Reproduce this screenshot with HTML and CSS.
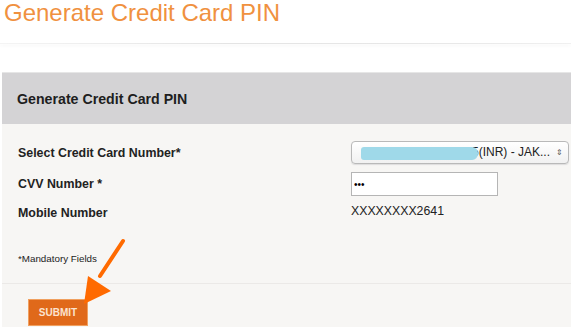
FILE: index.html
```html
<!DOCTYPE html>
<html>
  <head>
    <title>Generate Credit Card PIN</title>
    <link rel="stylesheet" href="styles.css">
  </head>
  <body>
    <h1 class="paginatitel">Generate Credit Card PIN</h1>
    <div class="titellijn"></div>

    <div class="paneel">
      <div class="paneelkop">Generate Credit Card PIN</div>
      <div class="paneelbody">
        <div class="formulier">
          <div class="label">Select Credit Card Number*</div>
          <div class="keuzelijst">
            <span class="kaarttekst">4XXXXXXXXX5(INR) - JAK...</span>
            <span class="pijltjes">&#8661;</span>
            <span class="wegwerking"></span>
          </div>
          <div class="label">CVV Number *</div>
          <div><input type="password" class="invoerveld" value="123" /></div>
          <div class="label">Mobile Number</div>
          <div class="waarde">XXXXXXXX2641</div>
        </div>
        <div class="verplicht">*Mandatory Fields</div>
        <div class="knoppenbalk">
          <button class="verzendknop">SUBMIT</button>
        </div>
      </div>
    </div>

    <svg class="aanwijzer" width="60" height="70" viewBox="0 0 60 70">
      <line x1="55" y1="3" x2="32" y2="38" stroke="#ff6a00" stroke-width="4" stroke-linecap="round" />
      <polygon points="16,66 20,38 43,53" fill="#ff6a00" />
    </svg>
  </body>
</html>
```

FILE: styles.css
```css
body {
  margin: 0;
  background-color: white;
  font-family: "Liberation Sans", Arial, sans-serif;
  position: relative;
}
.paginatitel {
  margin: 0;
  padding: 0 0 0 4px;
  height: 26px;
  line-height: 26px;
  font-size: 24px;
  font-weight: normal;
  color: #f0913f;
}
.titellijn {
  margin-top: 17px;
  height: 1px;
  background: linear-gradient(to right, #f4f4f4, #e4e4e4 40%, #e8e8e8 80%, #f0f0f0);
  box-shadow: 0 2px 3px #f2f2f2;
}
.paneel {
  margin: 28px 0 0 2px;
  border-top: 1px solid #e6e6e6;
}
.paneelkop {
  height: 51px;
  line-height: 52px;
  padding-left: 15px;
  background-color: #d4d3d5;
  font-size: 14.2px;
  font-weight: bold;
  color: #1e1e1e;
}
.paneelbody {
  background-color: #f7f6f4;
  padding-top: 17px;
  height: 186px;
}
.formulier {
  display: grid;
  grid-template-columns: 349px 1fr;
  grid-template-rows: 23px 24px 18px;
  row-gap: 8px;
  align-items: center;
}
.label {
  padding-left: 16px;
  font-size: 12.4px;
  font-weight: bold;
  color: #222;
}
.keuzelijst {
  position: relative;
  width: 216px;
  height: 21px;
  border: 1px solid #b9b9b9;
  border-radius: 4px;
  background: linear-gradient(#ffffff, #f1f1f1);
  box-shadow: 0 1px 1px #ddd;
  font-size: 12px;
  line-height: 21px;
  color: #222;
  overflow: hidden;
}
.kaarttekst {
  position: absolute;
  right: 18px;
  top: 0;
  white-space: nowrap;
}
.pijltjes {
  position: absolute;
  right: 5px;
  top: 0;
  font-size: 8px;
  color: #555;
}
.wegwerking {
  position: absolute;
  z-index: 2;
  left: 9px;
  top: 5px;
  width: 117px;
  height: 13px;
  border-radius: 3px 6px 6px 3px;
  background-color: #9fd9e9;
}
.invoerveld {
  box-sizing: border-box;
  width: 147px;
  height: 24px;
  margin: 0;
  border: 1px solid #b5b5b5;
  background-color: white;
  font-size: 10px;
  padding: 0 2px;
}
.waarde {
  font-size: 12.3px;
  color: #222;
  line-height: 14px;
  margin-top: -5px;
}
.verplicht {
  margin-top: 31px;
  padding-left: 16px;
  font-size: 9.8px;
  color: #222;
}
.knoppenbalk {
  margin-top: 19px;
  border-top: 1px solid #ebe9e7;
  padding: 15px 0 0 26px;
}
.verzendknop {
  width: 60px;
  height: 27px;
  border: 1px solid #f0a05f;
  background-color: #e0691a;
  color: #fbe3cf;
  font-family: "Liberation Sans", Arial, sans-serif;
  font-size: 10px;
  font-weight: bold;
  padding: 0;
}
.aanwijzer {
  position: absolute;
  left: 68px;
  top: 238px;
}
```
